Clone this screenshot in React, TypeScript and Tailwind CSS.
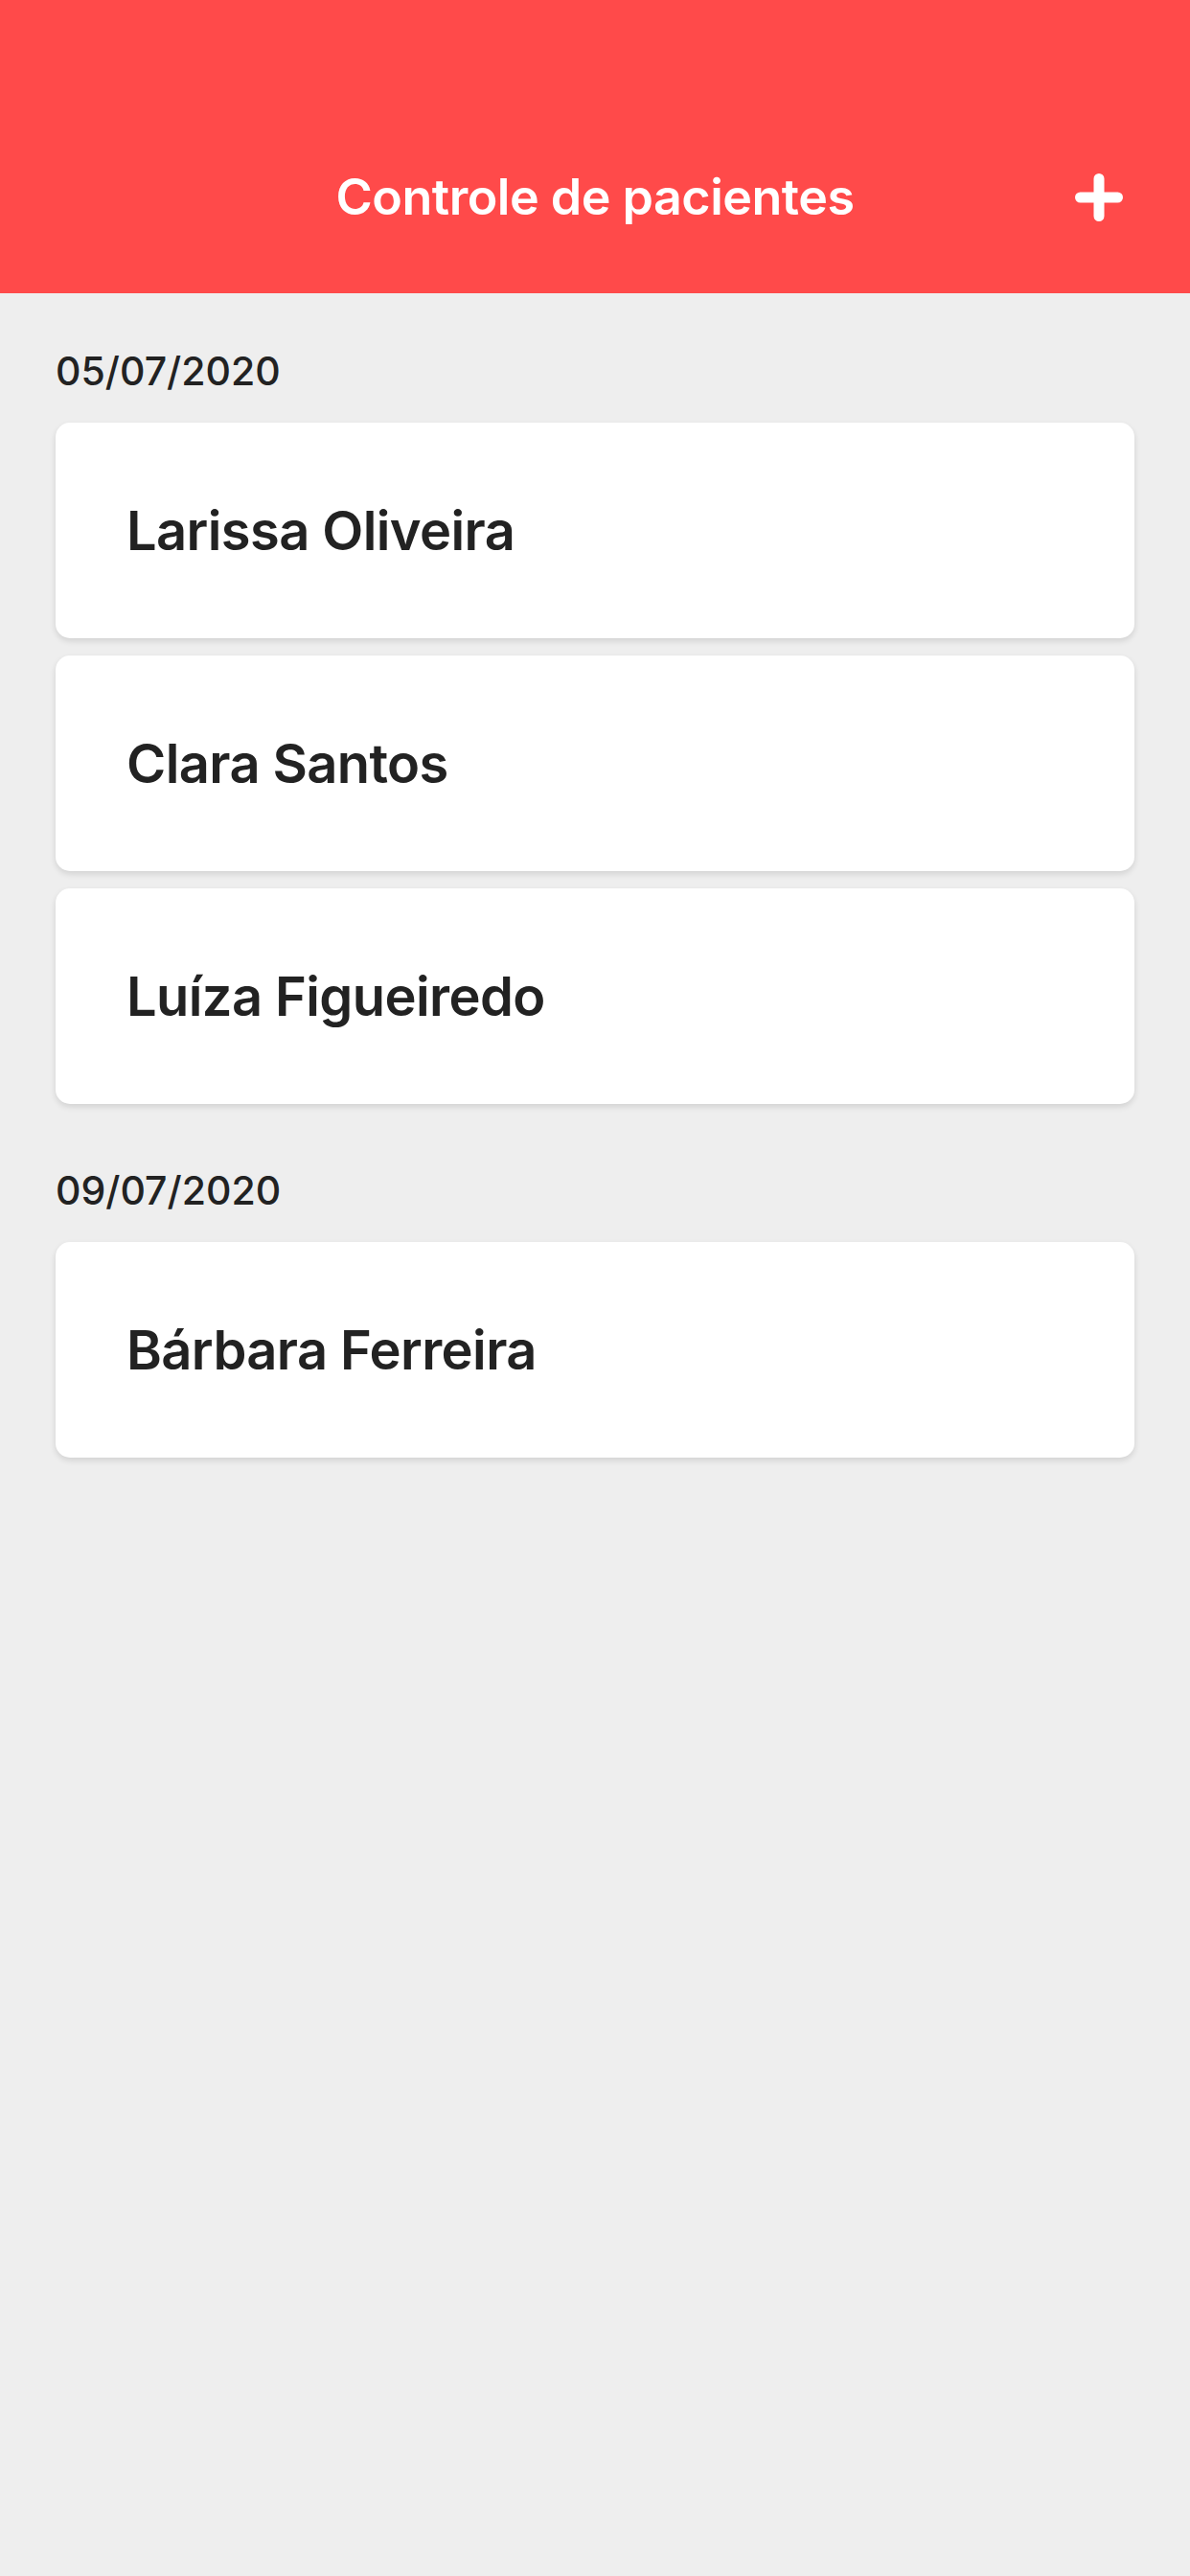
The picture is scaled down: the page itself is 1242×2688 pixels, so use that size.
import React from "react";

type Group = { date: string; patients: string[] };

const groups: Group[] = [
  { date: "05/07/2020", patients: ["Larissa Oliveira", "Clara Santos", "Luíza Figueiredo"] },
  { date: "09/07/2020", patients: ["Bárbara Ferreira"] },
];

const PlusIcon = () => (
  <svg width="52" height="52" viewBox="0 0 52 52" fill="none">
    <path d="M26 6.5v39M6.5 26h39" stroke="white" strokeWidth="11" strokeLinecap="round" />
  </svg>
);

const PatientCard = ({ name }: { name: string }) => (
  <div className="flex h-[225px] items-center rounded-[15px] bg-white pl-[74px] shadow-[0_3px_6px_rgba(0,0,0,0.12)]">
    <span className="text-[56px] font-semibold tracking-[-0.6px] text-[#222222]">{name}</span>
  </div>
);

export default function App() {
  return (
    <div
      className="min-h-[2688px] w-full bg-[#eeeeee]"
      style={{ fontFamily: "Inter, 'Noto Sans', sans-serif" }}
    >
      <header className="h-[306px] bg-[#ff4a4a]">
        <div className="grid h-[120px] translate-y-[146px] grid-cols-[1fr_auto_1fr] items-center">
          <div />
          <h1 className="text-[52px] font-semibold tracking-[-0.5px] text-white">Controle de pacientes</h1>
          <div className="flex justify-end pr-[69px]">
            <button className="flex items-center justify-center">
              <PlusIcon />
            </button>
          </div>
        </div>
      </header>

      <main className="flex flex-col gap-[65px] px-[58px] pt-[56px]">
        {groups.map((g) => (
          <section key={g.date} className="flex flex-col">
            <h2 className="mb-[29px] text-[41px] leading-[50px] font-medium text-[#222222]">{g.date}</h2>
            <div className="flex flex-col gap-[18px]">
              {g.patients.map((p) => (
                <PatientCard key={p} name={p} />
              ))}
            </div>
          </section>
        ))}
      </main>
    </div>
  );
}
